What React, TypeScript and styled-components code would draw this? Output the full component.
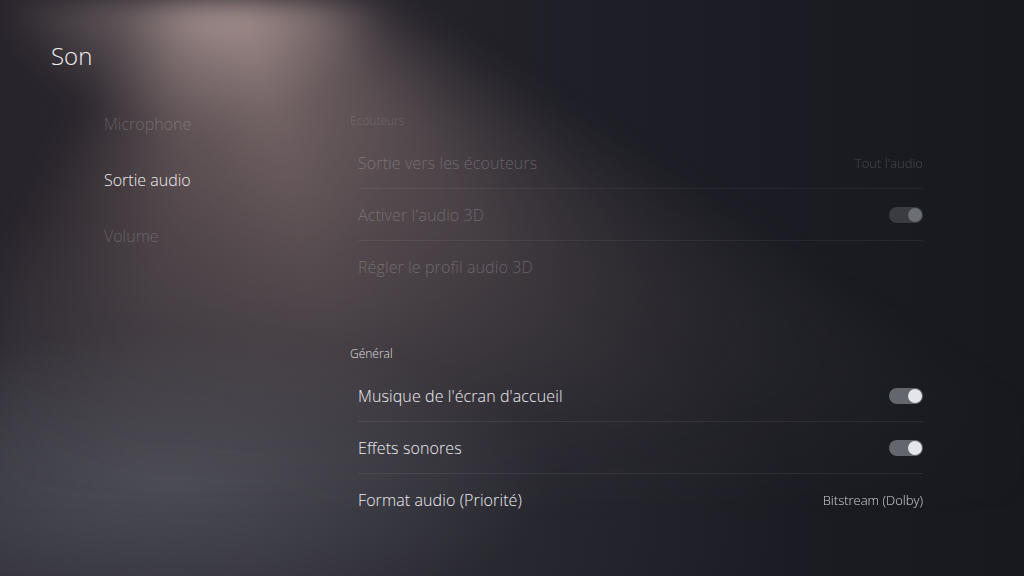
import React from "react";
import styled, { createGlobalStyle } from "styled-components";

const Global = createGlobalStyle`
  html, body { margin: 0; padding: 0; background: #16181f; }
  body { font-family: "Open Sans", "Noto Sans", sans-serif; -webkit-font-smoothing: antialiased; }
  * { box-sizing: border-box; }
`;

const Page = styled.div`
  position: relative;
  width: 1024px;
  height: 576px;
  overflow: hidden;
  background:
    radial-gradient(ellipse 380px 150px at 170px 480px, rgba(92, 94, 104, 0.55), rgba(92, 94, 104, 0) 100%),
    radial-gradient(ellipse 720px 300px at 80px 520px, rgba(62, 64, 74, 0.6), rgba(62, 64, 74, 0) 100%),
    linear-gradient(90deg, #28242b 0%, #2b272e 25%, #1f1f27 55%, #17191f 100%);
  color: #e9e7e8;
`;

const Beam = styled.div`
  position: absolute;
  inset: 0;
  pointer-events: none;
  background:
    radial-gradient(ellipse 200px 150px at 195px -20px, rgba(212, 188, 183, 0.62), rgba(212, 188, 183, 0) 100%),
    conic-gradient(from 0deg at 210px -120px,
      rgba(170, 145, 142, 0) 0deg,
      rgba(170, 145, 142, 0) 122deg,
      rgba(170, 145, 142, 0.45) 142deg,
      rgba(178, 152, 148, 0.65) 165deg,
      rgba(170, 145, 142, 0.5) 188deg,
      rgba(170, 145, 142, 0) 210deg,
      rgba(170, 145, 142, 0) 360deg);
  -webkit-mask-image: linear-gradient(180deg, #000 0%, rgba(0,0,0,0.8) 22%, rgba(0,0,0,0.45) 50%, rgba(0,0,0,0.1) 75%, rgba(0,0,0,0) 90%);
  mask-image: linear-gradient(180deg, #000 0%, rgba(0,0,0,0.8) 22%, rgba(0,0,0,0.45) 50%, rgba(0,0,0,0.1) 75%, rgba(0,0,0,0) 90%);
  filter: blur(14px);
`;

const Content = styled.div`
  position: relative;
  display: flex;
  flex-direction: column;
`;

const Title = styled.h1`
  margin: 0;
  padding: 42px 0 0 51px;
  font-size: 24px;
  line-height: 28px;
  font-weight: 300;
  color: #efeeef;
`;

const Body = styled.div`
  display: grid;
  grid-template-columns: 246px 573px;
  padding: 26px 0 0 104px;
`;

const Nav = styled.nav`
  display: flex;
  flex-direction: column;
`;

const NavItem = styled.div<{ $active?: boolean }>`
  height: 56px;
  display: flex;
  align-items: center;
  font-size: 16px;
  font-weight: 300;
  color: ${(p) => (p.$active ? "#f0eded" : "rgba(255,255,255,0.2)")};
`;

const Panel = styled.div`
  display: flex;
  flex-direction: column;
  padding-top: 17px;
`;

const Section = styled.section<{ $gap?: number }>`
  display: flex;
  flex-direction: column;
  margin-top: ${(p) => p.$gap ?? 0}px;
`;

const SectionTitle = styled.div<{ $disabled?: boolean }>`
  font-size: 12px;
  line-height: 16px;
  font-weight: 300;
  padding-bottom: 8px;
  color: ${(p) => (p.$disabled ? "rgba(255,255,255,0.16)" : "rgba(255,255,255,0.85)")};
`;

const Row = styled.div<{ $disabled?: boolean; $divider?: boolean }>`
  height: 52px;
  margin-left: 8px;
  display: flex;
  align-items: center;
  justify-content: space-between;
  border-bottom: 1px solid
    ${(p) => (p.$divider ? (p.$disabled ? "rgba(255,255,255,0.05)" : "rgba(255,255,255,0.07)") : "transparent")};
  color: ${(p) => (p.$disabled ? "rgba(255,255,255,0.22)" : "#eeedf0")};
`;

const Label = styled.span`
  font-size: 16px;
  font-weight: 300;
  letter-spacing: 0.1px;
`;

const Value = styled.span`
  font-size: 13px;
  font-weight: 300;
  color: inherit;
  opacity: 0.85;
`;

const Track = styled.div<{ $disabled?: boolean }>`
  width: 34px;
  height: 16px;
  border-radius: 8px;
  background: ${(p) => (p.$disabled ? "rgba(120,122,130,0.35)" : "#64666d")};
  display: flex;
  align-items: center;
  justify-content: flex-end;
  padding: 1px;
`;

const Knob = styled.div<{ $disabled?: boolean }>`
  width: 14px;
  height: 14px;
  border-radius: 50%;
  background: ${(p) => (p.$disabled ? "rgba(170,172,180,0.45)" : "#e4e4ea")};
`;

const Toggle = ({ disabled }: { disabled?: boolean }) => (
  <Track $disabled={disabled}>
    <Knob $disabled={disabled} />
  </Track>
);

export default function App() {
  return (
    <Page>
      <Global />
      <Beam />
      <Content>
        <Title>Son</Title>
        <Body>
          <Nav>
            <NavItem>Microphone</NavItem>
            <NavItem $active>Sortie audio</NavItem>
            <NavItem>Volume</NavItem>
          </Nav>
          <Panel>
            <Section>
              <SectionTitle $disabled>Écouteurs</SectionTitle>
              <Row $disabled $divider>
                <Label>Sortie vers les écouteurs</Label>
                <Value>Tout l'audio</Value>
              </Row>
              <Row $disabled $divider>
                <Label>Activer l'audio 3D</Label>
                <Toggle disabled />
              </Row>
              <Row $disabled>
                <Label>Régler le profil audio 3D</Label>
              </Row>
            </Section>
            <Section $gap={53}>
              <SectionTitle>Général</SectionTitle>
              <Row $divider>
                <Label>Musique de l'écran d'accueil</Label>
                <Toggle />
              </Row>
              <Row $divider>
                <Label>Effets sonores</Label>
                <Toggle />
              </Row>
              <Row>
                <Label>Format audio (Priorité)</Label>
                <Value>Bitstream (Dolby)</Value>
              </Row>
            </Section>
          </Panel>
        </Body>
      </Content>
    </Page>
  );
}
